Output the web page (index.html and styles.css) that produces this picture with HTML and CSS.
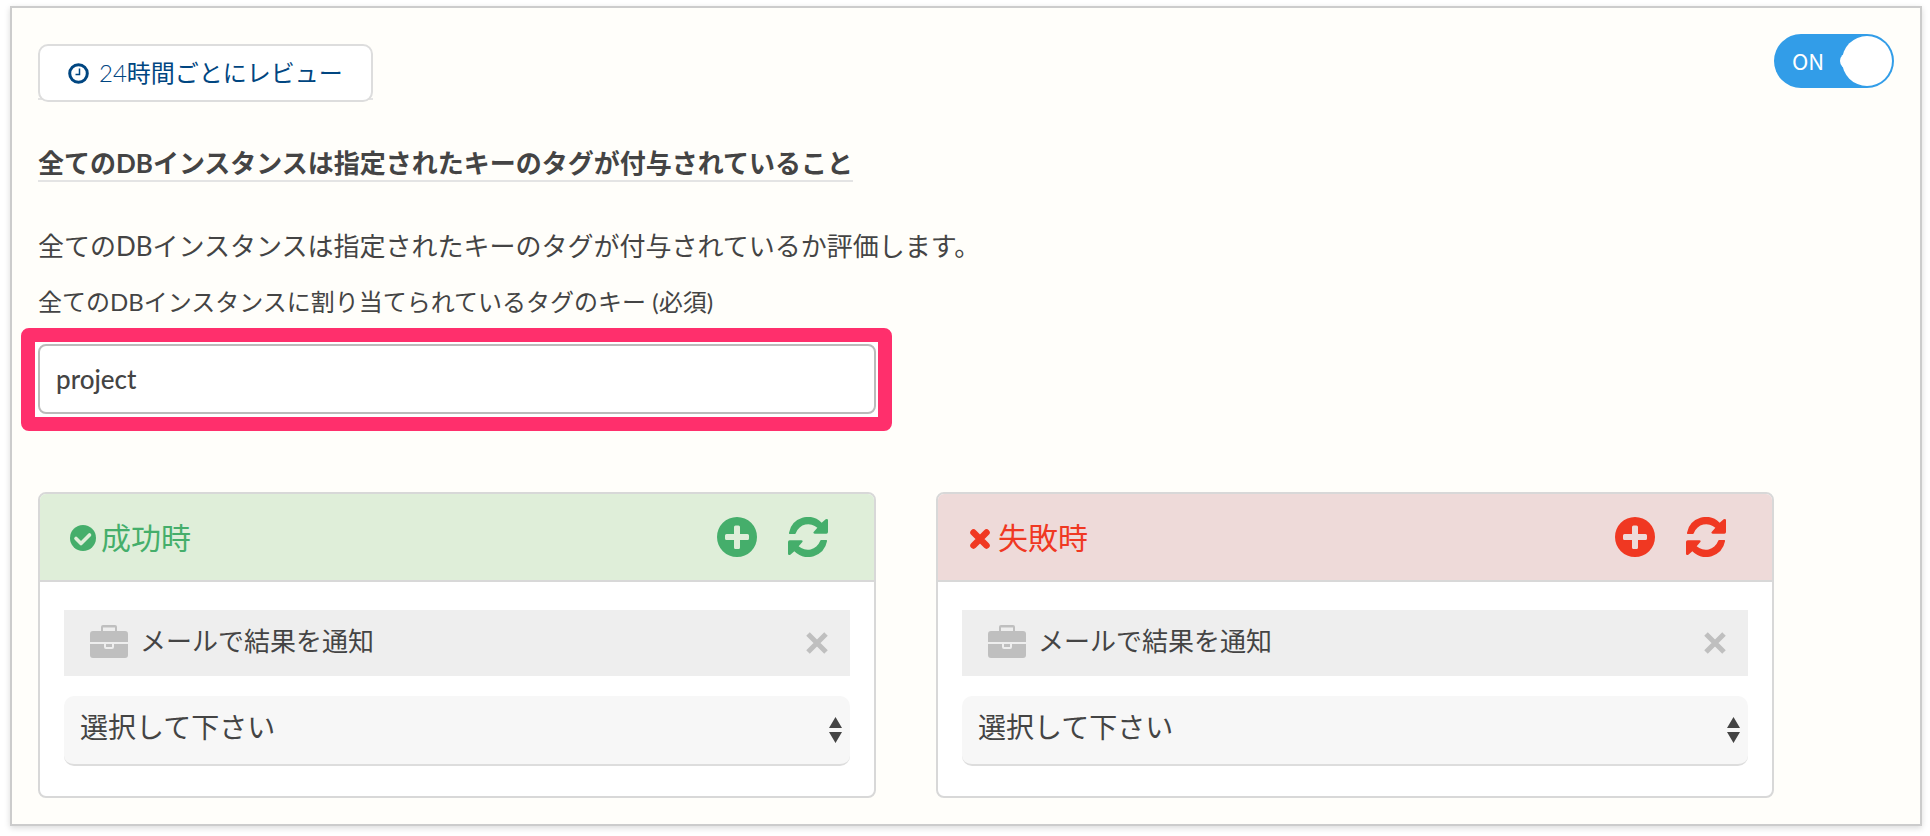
FILE: index.html
```html
<!doctype html>
<html lang="ja">
	<head>
		<meta charset="UTF-8">
		<meta name="viewport" content="width=device-width, initial-scale=1">
		<title>ポリシー設定</title>
		<link rel="stylesheet" href="styles.css">
	</head>
<body>
	<!--アイコン定義-->
	<svg class="defs" aria-hidden="true">
		<symbol id="clock" viewBox="0 0 21 21">
			<circle cx="10.5" cy="10.5" r="8.8" fill="none" stroke="currentColor" stroke-width="3"/>
			<path d="M11.5 5.5v6H7.5" fill="none" stroke="currentColor" stroke-width="1.5"/>
		</symbol>
		<symbol id="check" viewBox="0 0 26 26">
			<circle cx="13" cy="13" r="13" fill="currentColor"/>
			<path d="M6 13.500l5 5 8.500-8.500" fill="none" stroke="#dfeed9" stroke-width="3.6" stroke-linecap="round" stroke-linejoin="round"/>
		</symbol>
		<symbol id="cross" viewBox="0 0 20 20">
			<path d="M3.5 3.5l13 13M16.5 3.5l-13 13" fill="none" stroke="currentColor" stroke-width="6.5" stroke-linecap="round"/>
		</symbol>
		<symbol id="plus" viewBox="0 0 40 40">
			<path fill="currentColor" fill-rule="evenodd" d="M20 0a20 20 0 1 0 0 40a20 20 0 1 0 0-40zM18.5 8.5h3q1.5 0 1.5 1.5v7h7.5q1.5 0 1.5 1.5v3q0 1.5-1.5 1.5H23v7.5q0 1.5-1.5 1.5h-3q-1.5 0-1.5-1.500V23H9.5q-1.5 0-1.5-1.5v-3Q8 17 9.5 17H17v-7q0-1.5 1.5-1.5z"/>
		</symbol>
		<symbol id="refresh" viewBox="0 0 120 118">
			<path id="arc" fill="currentColor" d="M5 50Q2 50 3 46A58 58 0 0 1 101 16L113 6Q119 3 120 8V44Q120 49 115 49H80Q74 48 77 44L88 31A40 40 0 0 0 24 46Q23 50 20 50Z"/>
			<use href="#arc" transform="rotate(180 60 59)"/>
		</symbol>
		<symbol id="briefcase" viewBox="0 0 38 33">
			<path fill="currentColor" fill-rule="evenodd" d="M11 6V2q0-2 2-2h12q2 0 2 2v4h8q3 0 3 3v8H0V9q0-3 3-3zM13 6h12V2.5H13z"/>
			<path fill="currentColor" fill-rule="evenodd" d="M0 19h14v3q0 2 2 2h6q2 0 2-2v-3h14v11q0 3-3 3H3q-3 0-3-3zM16 19h6v3h-6z"/>
		</symbol>
		<symbol id="close" viewBox="0 0 22 22">
			<path d="M2 2l18 18M20 2L2 20" fill="none" stroke="currentColor" stroke-width="5"/>
		</symbol>
		<symbol id="updown" viewBox="0 0 13 26">
			<path fill="currentColor" d="M6.5 0L13 11H0zM6.5 26L0 15h13z"/>
		</symbol>
	</svg>

	<div class="policy">
		<div class="main">
			<div class="review">
				<button type="button" class="review-btn"><svg class="icon-clock"><use href="#clock"/></svg><span>24</span>時間ごとにレビュー</button>
			</div>
			<h2><span>全てのDBインスタンスは指定されたキーのタグが付与されていること</span></h2>
			<p class="desc">全てのDBインスタンスは指定されたキーのタグが付与されているか評価します。</p>
			<label class="key-label" for="tag-key">全てのDBインスタンスに割り当てられているタグのキー (必須)</label>
			<div class="cols">
				<div class="key-field">
					<input type="text" id="tag-key" value="project">
				</div>
			</div>
			<div class="cols panels">
				<div class="panel success">
					<div class="panel-head">
						<h3><svg class="icon-check"><use href="#check"/></svg>成功時</h3>
						<button type="button" aria-label="追加"><svg><use href="#plus"/></svg></button>
						<button type="button" aria-label="更新"><svg><use href="#refresh"/></svg></button>
					</div>
					<div class="panel-body">
						<div class="action">
							<svg class="icon-case"><use href="#briefcase"/></svg>
							<span>メールで結果を通知</span>
							<button type="button" aria-label="削除"><svg><use href="#close"/></svg></button>
						</div>
						<div class="select">
							<select aria-label="成功時のアクション"><option>選択して下さい</option></select>
							<svg><use href="#updown"/></svg>
						</div>
					</div>
				</div>
				<div class="panel failure">
					<div class="panel-head">
						<h3><svg class="icon-cross"><use href="#cross"/></svg>失敗時</h3>
						<button type="button" aria-label="追加"><svg><use href="#plus"/></svg></button>
						<button type="button" aria-label="更新"><svg><use href="#refresh"/></svg></button>
					</div>
					<div class="panel-body">
						<div class="action">
							<svg class="icon-case"><use href="#briefcase"/></svg>
							<span>メールで結果を通知</span>
							<button type="button" aria-label="削除"><svg><use href="#close"/></svg></button>
						</div>
						<div class="select">
							<select aria-label="失敗時のアクション"><option>選択して下さい</option></select>
							<svg><use href="#updown"/></svg>
						</div>
					</div>
				</div>
			</div>
		</div>
		<label class="toggle">
			<input type="checkbox" checked>
			<span>ON</span>
		</label>
	</div>
</body>
</html>
```
FILE: styles.css
```css
*{margin:0;padding:0;box-sizing:border-box;}
body{padding:6px 8px 10px 10px;background:#fff;color:#444;font:26px/40px Lato,"Noto Sans CJK JP",sans-serif;}
button,input,select{font:inherit;color:inherit;}
button{border:0;background:none;cursor:pointer;}
svg{display:block;}
.defs{position:absolute;width:0;height:0;}

.policy{display:flex;align-items:flex-start;padding:26px;border:2px solid #ccc;background:#fffefa;box-shadow:0 2px 6px rgba(0,0,0,.15);}
.main{flex:1;min-width:0;padding-top:10px;}

/*レビュー間隔*/
.review{width:fit-content;background:linear-gradient(#e4e4e4,#e4e4e4) 0 54px/100% 2px no-repeat;}
.review-btn{display:flex;align-items:center;height:58px;padding:0 28px;border:2px solid #ddd;border-radius:10px;background:#fff;color:#004681;font-size:24px;}
.review-btn span{font-weight:300;}
.icon-clock{width:21px;height:21px;margin-right:10px;}

h2{margin-top:44px;font-size:26px;line-height:34px;}
h2 span{display:inline-block;border-bottom:2px solid #e4e4e4;}
.desc{margin-top:44px;}
.key-label{display:block;margin-top:16px;font-size:24px;}

.cols{display:grid;grid-template-columns:1fr 1fr;gap:60px;}
/*必須項目の強調枠*/
.key-field{position:relative;margin-top:22px;}
.key-field::before{content:"";position:absolute;top:-16px;right:-16px;bottom:-17px;left:-17px;border:14px solid #ff2f6c;border-radius:8px;background:#fff;}
.key-field input{display:block;position:relative;width:100%;height:70px;padding:0 16px;border:2px solid #bbb;border-radius:8px;background:#fff;font-weight:500;}

.panels{margin-top:78px;}
.panel{border:2px solid #d8d8d8;border-radius:8px;background:#fff;overflow:hidden;}
.panel-head{display:flex;align-items:center;height:88px;padding:0 46px 0 30px;border-bottom:2px solid #d8d8d8;}
.panel-head h3{display:flex;align-items:center;flex:1;font-size:30px;font-weight:400;}
.panel-head button{margin-left:31px;}
.panel-head button svg{width:40px;height:40px;}
.success .panel-head{background:#dfeed9;color:#45ae6b;}
.failure .panel-head{background:#eedad9;color:#f03822;}
.icon-check{width:26px;height:26px;margin:2px 5px 0 0;}
.icon-cross{width:20px;height:20px;margin:4px 8px 0 2px;}

.panel-body{padding:28px 24px 30px;}
.action{display:flex;align-items:center;height:66px;padding:0 22px 4px 26px;background:#eee;}
.action span{flex:1;}
.action button,.icon-case{color:#bfbfbf;}
.action button{margin-top:4px;}
.action button svg{width:22px;height:22px;}
.icon-case{width:38px;height:33px;margin-right:12px;}
.select{position:relative;margin-top:20px;}
.select select{display:block;width:100%;height:70px;padding:0 16px 6px;border:0;border-bottom:2px solid #ddd;border-radius:10px;background:#f7f7f7;font-size:28px;appearance:none;}
.select svg{position:absolute;right:8px;top:21px;width:13px;height:26px;pointer-events:none;}

/*ON/OFFスイッチ*/
.toggle{position:relative;width:120px;height:54px;padding-left:18px;border-radius:27px;background:#329de8;color:#fff;font-family:"Noto Sans CJK JP",sans-serif;font-size:22px;line-height:52px;cursor:pointer;}
.toggle input{position:absolute;opacity:0;}
.toggle::before{content:"";position:absolute;right:38px;top:19px;width:16px;height:16px;border-radius:8px;background:#fff;}
.toggle::after{content:"";position:absolute;right:2px;top:2px;width:50px;height:50px;border-radius:50%;background:#fff;}
```
